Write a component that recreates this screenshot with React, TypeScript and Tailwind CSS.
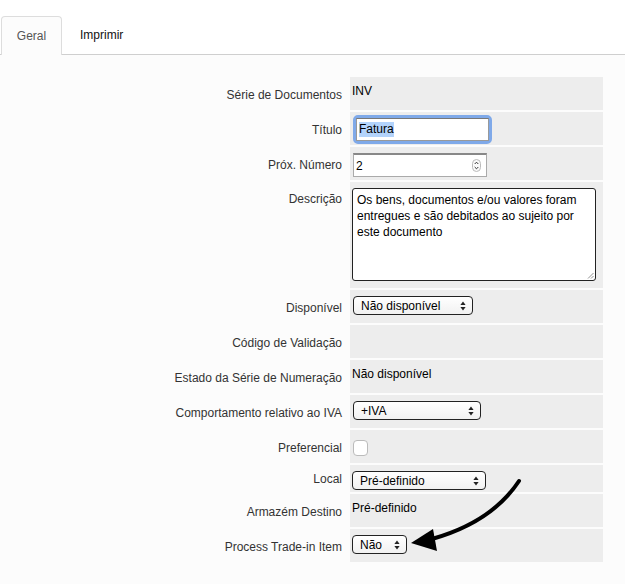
import React from "react";

const font = { fontFamily: '"Liberation Sans", Arial, sans-serif' };

function UpDown() {
  return (
    <svg width="6" height="10" viewBox="0 0 6 10" className="shrink-0">
      <path d="M3 0.5 L5.6 4 L0.4 4 Z" fill="#222" />
      <path d="M3 9.5 L5.6 6 L0.4 6 Z" fill="#222" />
    </svg>
  );
}

function Select({ label, width }: { label: string; width: string }) {
  return (
    <div
      className={`flex h-[19px] ${width} items-center justify-between rounded-[4px] border border-[#222] bg-gradient-to-b from-white to-[#f1f1f1] pl-[7px] pr-[6px] text-[12px] text-black`}
    >
      <span>{label}</span>
      <UpDown />
    </div>
  );
}

function Row({
  label,
  h = "h-[33px]",
  lpt = "pt-[11px]",
  children,
}: {
  label: string;
  h?: string;
  lpt?: string;
  children?: React.ReactNode;
}) {
  return (
    <div className={`flex ${h}`}>
      <div className={`w-[350px] shrink-0 pr-[8px] text-right text-[12px] leading-[14px] text-[#333] ${lpt}`}>
        {label}
      </div>
      <div className="w-[253px] shrink-0 bg-[#ededed] pl-[2px]">{children}</div>
    </div>
  );
}

function Text({ children }: { children: React.ReactNode }) {
  return <div className="pt-[7px] text-[12px] leading-[14px] text-black">{children}</div>;
}

export default function App() {
  return (
    <div className="relative min-h-[584px] w-[639px] bg-white" style={font}>
      {/* tabs */}
      <div className="flex h-[55px] w-[625px] items-end border-b border-[#cfcfcf] pl-[1px]">
        <div className="-mb-px flex h-[39px] w-[61px] items-center justify-center rounded-t-[4px] border border-b-0 border-[#ddd] bg-[#fcfcfc] text-[12px] text-[#555]">
          Geral
        </div>
        <div className="flex h-[38px] items-center pl-[18px] text-[12px] text-[#111]">Imprimir</div>
      </div>

      {/* form panel */}
      <div className="flex min-h-[529px] w-[625px] flex-col gap-[2px] bg-[#fcfcfc] pt-[22px]">
        <Row label="Série de Documentos">
          <Text>INV</Text>
        </Row>
        <Row label="Título">
          <div className="ml-[1px] mt-[3px] h-[29px] w-[139px] rounded-[5px] border-[3px] border-[#7fa9e9]">
            <div className="flex h-[23px] items-center border border-[#999] border-t-[#777] bg-white pl-[2px] text-[12px] text-black">
              <span className="bg-[#b3d3fb] leading-[15px]">Fatura</span>
            </div>
          </div>
        </Row>
        <Row label="Próx. Número">
          <div className="ml-[1px] mt-[6px] flex h-[24px] w-[134px] items-center justify-between border border-[#aaa] border-t-[2px] border-t-[#888] bg-white pl-[2px] pr-[5px] text-[12px] text-black">
            <span>2</span>
            <svg width="9" height="13" viewBox="0 0 9 13">
              <rect x="0.5" y="0.5" width="8" height="12" rx="4" fill="#fafafa" stroke="#bbb" />
              <path d="M2.7 5 L4.5 3.2 L6.3 5" fill="none" stroke="#333" strokeWidth="1" />
              <path d="M2.7 8 L4.5 9.8 L6.3 8" fill="none" stroke="#333" strokeWidth="1" />
            </svg>
          </div>
        </Row>
        <Row label="Descrição" h="h-[106px]" lpt="pt-[10px]">
          <div className="relative ml-[0px] mt-[6px] h-[93px] w-[244px] rounded-[3px] border border-[#222] bg-white px-[4px] pt-[3px] text-[12px] leading-[16px] text-black">
            Os bens, documentos e/ou valores foram entregues e são debitados ao sujeito por este documento
            <svg width="7" height="7" viewBox="0 0 7 7" className="absolute bottom-[1px] right-[1px]">
              <path d="M6.5 1 L1 6.5 M6.5 4 L4 6.5" stroke="#777" strokeWidth="0.8" />
            </svg>
          </div>
        </Row>
        <Row label="Disponível">
          <div className="ml-[1px] mt-[6px]">
            <Select label="Não disponível" width="w-[120px]" />
          </div>
        </Row>
        <Row label="Código de Validação" />
        <Row label="Estado da Série de Numeração">
          <Text>Não disponível</Text>
        </Row>
        <Row label="Comportamento relativo ao IVA">
          <div className="ml-[1px] mt-[6px]">
            <Select label="+IVA" width="w-[128px]" />
          </div>
        </Row>
        <Row label="Preferencial">
          <div className="ml-[1px] mt-[10px] h-[16px] w-[15px] rounded-[4px] border border-[#bbb] bg-white" />
        </Row>
        <Row label="Local" h="h-[27px]" lpt="pt-[7px]">
          <div className="mt-[6px]">
            <Select label="Pré-definido" width="w-[134px]" />
          </div>
        </Row>
        <Row label="Armazém Destino">
          <Text>Pré-definido</Text>
        </Row>
        <Row label="Process Trade-in Item">
          <div className="mt-[6px]">
            <Select label="Não" width="w-[55px]" />
          </div>
        </Row>
      </div>

      {/* pointer arrow */}
      <svg className="pointer-events-none absolute left-0 top-0" width="639" height="584">
        <path d="M519 481 Q 492 522 432 539" fill="none" stroke="#000" strokeWidth="4" strokeLinecap="round" />
        <path d="M411 543 L433 529 L437 551 Z" fill="#000" />
      </svg>
    </div>
  );
}
